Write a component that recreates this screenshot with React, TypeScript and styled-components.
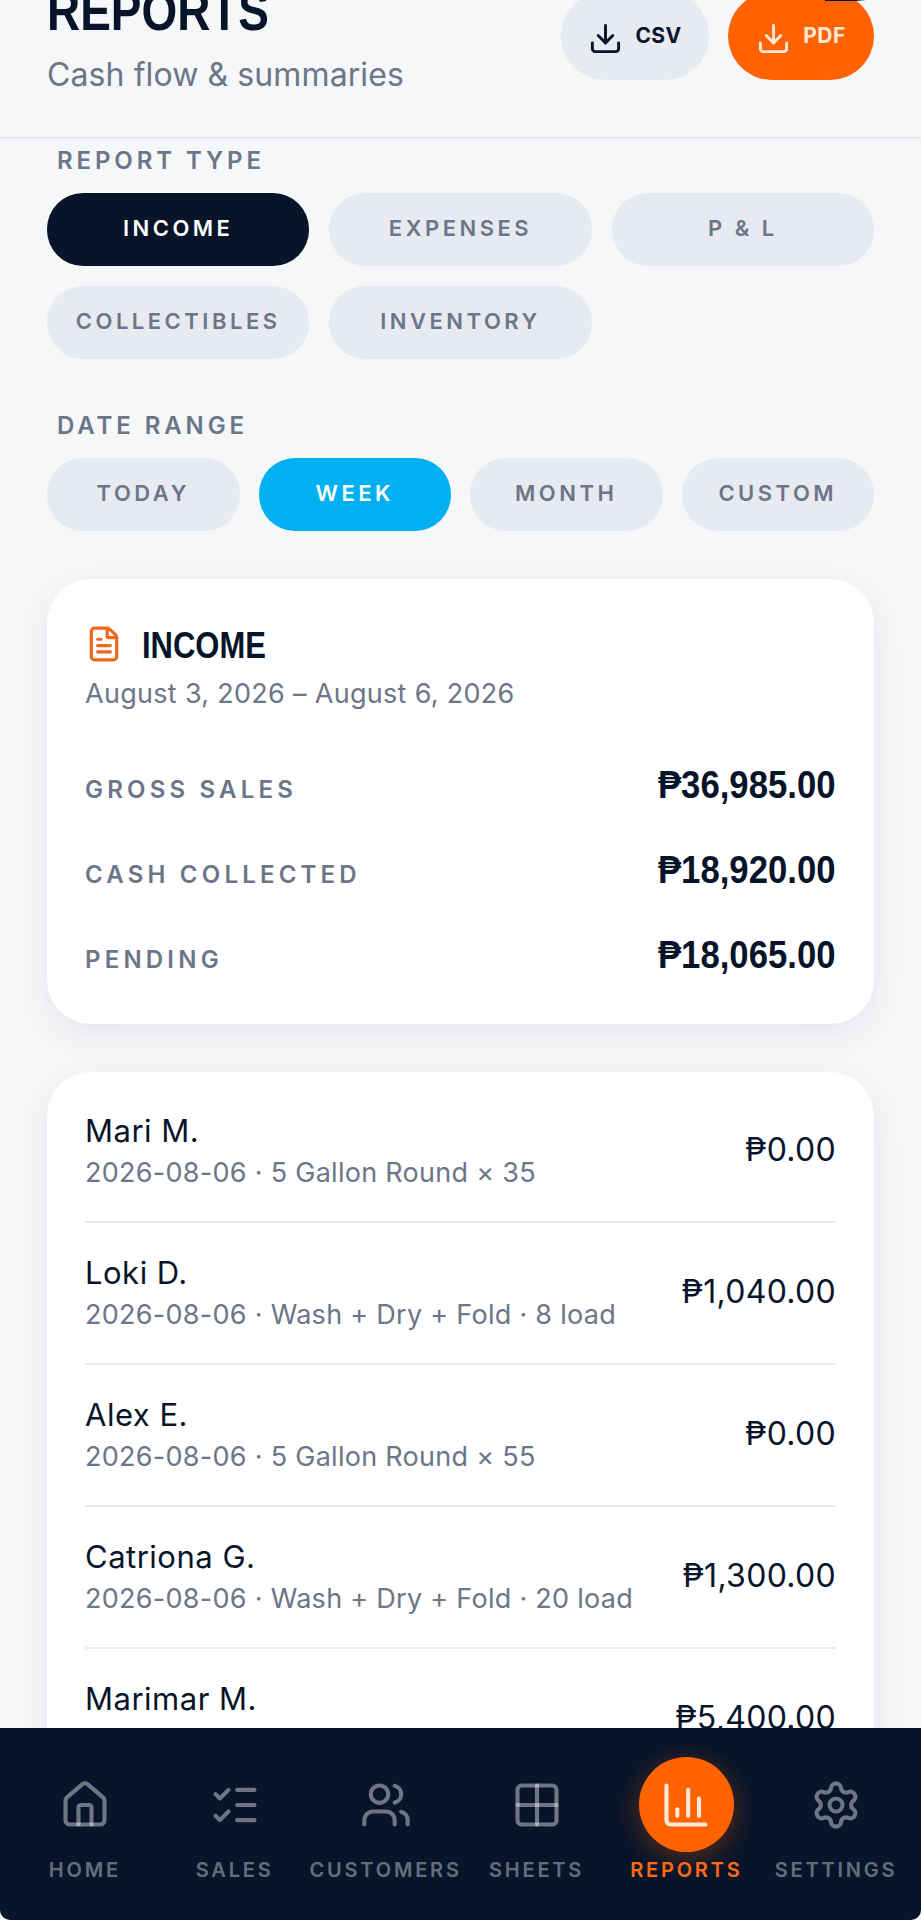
import React from "react";
import styled, { createGlobalStyle } from "styled-components";
import { ChartColumn, Download, FileText, Grid2x2, House, ListChecks, Settings, Users } from "lucide-react";

const GlobalStyle = createGlobalStyle`
  html, body {
    margin: 0;
    padding: 0;
    background: #f5f7f9;
  }
`;

const Screen = styled.div`
  width: 921px;
  height: 1920px;
  display: flex;
  flex-direction: column;
  overflow: hidden;
  background: #f5f7f9;
  font-family: Inter, "Open Sans", sans-serif;
  color: #07142a;
`;

const Content = styled.main`
  flex: 1;
  min-height: 0;
  overflow: hidden;
`;

const Header = styled.header`
  height: 145px;
  margin-top: -8px;
  padding: 0 47px;
  border-bottom: 2px solid #e6e9ee;
  display: flex;
  justify-content: space-between;
  align-items: flex-start;
`;

const TitleBlock = styled.div`
  margin-top: -6px;
`;

const Title = styled.h1`
  margin: 0;
  font: 700 56px/50px "Liberation Sans", sans-serif;
  color: #07142a;
  transform: scaleX(0.82);
  transform-origin: left center;
`;

const Subtitle = styled.p`
  margin: 19px 0 0;
  font-size: 32px;
  line-height: 40px;
  letter-spacing: 0.1px;
  color: #6b7688;
`;

const ExportButtons = styled.div`
  display: flex;
  gap: 19px;
`;

const ExportButton = styled.button<{ $primary?: boolean }>`
  position: relative;
  width: ${(p) => (p.$primary ? 146 : 148)}px;
  height: 88px;
  border: 0;
  border-radius: 44px;
  padding: 4px 0 0;
  display: flex;
  justify-content: center;
  align-items: center;
  gap: 12px;
  font: 700 21px Inter, sans-serif;
  letter-spacing: 0.4px;
  background: ${(p) => (p.$primary ? "#ff6200" : "#e7eaf0")};
  color: ${(p) => (p.$primary ? "#ffe9d9" : "#07142a")};

  /* sliver of the status bar left at the top of the capture */
  &::after {
    content: "${(p) => (p.$primary ? "" : "none")}";
    display: ${(p) => (p.$primary ? "block" : "none")};
    position: absolute;
    top: 8px;
    left: 97px;
    width: 40px;
    height: 1px;
    background: linear-gradient(90deg, #07142a 75%, rgba(7, 20, 42, 0.15));
  }
`;

const ButtonLabel = styled.span`
  margin-bottom: 6px;
`;

const Filters = styled.section`
  padding: 7px 47px 0;
`;

const FilterLabel = styled.div<{ $gapTop?: boolean }>`
  margin: ${(p) => (p.$gapTop ? "52px" : "0")} 0 17px 10px;
  font-size: 24px;
  line-height: 30px;
  font-weight: 600;
  letter-spacing: 3.9px;
  color: #6b7688;
`;

const ChipGrid = styled.div<{ $cols: number; $gap: number }>`
  display: grid;
  grid-template-columns: repeat(${(p) => p.$cols}, 1fr);
  gap: 20px ${(p) => p.$gap}px;
`;

const Chip = styled.div<{ $tone?: "dark" | "sky" }>`
  height: 73px;
  border-radius: 36px;
  display: flex;
  justify-content: center;
  align-items: center;
  padding-bottom: 4px;
  box-sizing: border-box;
  font-size: 22px;
  font-weight: 600;
  letter-spacing: 3.5px;
  background: ${(p) => (p.$tone === "dark" ? "#07142a" : p.$tone === "sky" ? "#00b0f0" : "#e7eaf0")};
  color: ${(p) => (p.$tone ? "#ffffff" : "#6b7688")};
`;

const Card = styled.section`
  margin: 48px 47px 0;
  background: #ffffff;
  border-radius: 44px;
  box-shadow: 0 10px 32px rgba(7, 20, 42, 0.07);
`;

const SummaryCard = styled(Card)`
  padding: 48px 38px 27px;
`;

const SummaryHead = styled.div`
  display: flex;
  align-items: center;
  gap: 19px;
  height: 34px;
  color: #f0661a;
`;

const SummaryTitle = styled.h2`
  margin: 4px 0 0;
  font: 700 36px/34px "Liberation Sans", sans-serif;
  color: #07142a;
  transform: scaleX(0.86);
  transform-origin: left center;
`;

const SummaryDates = styled.div`
  margin: 14px 0 29px;
  font-size: 27px;
  line-height: 38px;
  letter-spacing: 0.3px;
  color: #6b7688;
`;

const SummaryRow = styled.div`
  display: flex;
  justify-content: space-between;
  align-items: baseline;
`;

const SummaryLabel = styled.span`
  font-size: 24px;
  font-weight: 600;
  letter-spacing: 4.2px;
  color: #6b7688;
`;

const SummaryValue = styled.span`
  font: 700 39px/85px "Liberation Sans", sans-serif;
  color: #07142a;
  transform: scaleX(0.89);
  transform-origin: right center;
`;

const ListCard = styled(Card)`
  padding: 9px 38px 0;
`;

const SaleRow = styled.div`
  display: flex;
  justify-content: space-between;
  align-items: center;
  padding: 32px 0 30px;
  border-bottom: 2px solid #e8ebef;
`;

const SaleName = styled.div`
  font-size: 31px;
  line-height: 36px;
  letter-spacing: 0.5px;
  color: #07142a;
`;

const SaleMeta = styled.div`
  margin-top: 6px;
  font-size: 27px;
  line-height: 36px;
  letter-spacing: 0.28px;
  color: #6b7688;
`;

const SaleAmount = styled.div`
  padding-bottom: 6px;
  font-size: 32px;
  letter-spacing: 0.3px;
  color: #07142a;
`;

const Nav = styled.nav`
  height: 192px;
  flex: none;
  padding: 0 10px;
  display: grid;
  grid-template-columns: repeat(6, 1fr);
  background: #07142a;
  border-radius: 0 0 10px 10px;
`;

const NavItem = styled.div<{ $active?: boolean }>`
  display: flex;
  flex-direction: column;
  align-items: center;
  font-size: 20px;
  font-weight: 600;
  line-height: 24px;
  letter-spacing: 2.8px;
  white-space: nowrap;
  color: ${(p) => (p.$active ? "#ff6a13" : "rgba(255, 255, 255, 0.4)")};
`;

const NavIcon = styled.div<{ $active?: boolean }>`
  width: 95px;
  height: 95px;
  margin: 29px 0 6px;
  display: flex;
  justify-content: center;
  align-items: center;
  border-radius: 50%;
  background: ${(p) => (p.$active ? "#ff6200" : "transparent")};
  color: ${(p) => (p.$active ? "#ffe9d9" : "rgba(255, 255, 255, 0.42)")};
  box-shadow: ${(p) => (p.$active ? "0 6px 28px rgba(255, 98, 0, 0.35)" : "none")};
`;

const reportTypes = ["INCOME", "EXPENSES", "P & L", "COLLECTIBLES", "INVENTORY"];
const dateRanges = ["TODAY", "WEEK", "MONTH", "CUSTOM"];

const summary = [
  { label: "GROSS SALES", value: "₱36,985.00" },
  { label: "CASH COLLECTED", value: "₱18,920.00" },
  { label: "PENDING", value: "₱18,065.00" },
];

const sales = [
  { name: "Mari M.", meta: "2026-08-06 · 5 Gallon Round × 35", amount: "₱0.00" },
  { name: "Loki D.", meta: "2026-08-06 · Wash + Dry + Fold · 8 load", amount: "₱1,040.00" },
  { name: "Alex E.", meta: "2026-08-06 · 5 Gallon Round × 55", amount: "₱0.00" },
  { name: "Catriona G.", meta: "2026-08-06 · Wash + Dry + Fold · 20 load", amount: "₱1,300.00" },
  { name: "Marimar M.", meta: "2026-08-06 · Wash + Dry + Fold · 30 load", amount: "₱5,400.00" },
];

const navItems = [
  { label: "HOME", icon: House },
  { label: "SALES", icon: ListChecks },
  { label: "CUSTOMERS", icon: Users },
  { label: "SHEETS", icon: Grid2x2 },
  { label: "REPORTS", icon: ChartColumn, active: true },
  { label: "SETTINGS", icon: Settings },
];

export default function App() {
  return (
    <Screen>
      <GlobalStyle />
      <Content>
        <Header>
          <TitleBlock>
            <Title>REPORTS</Title>
            <Subtitle>Cash flow &amp; summaries</Subtitle>
          </TitleBlock>
          <ExportButtons>
            <ExportButton>
              <Download size={35} strokeWidth={2} />
              <ButtonLabel>CSV</ButtonLabel>
            </ExportButton>
            <ExportButton $primary>
              <Download size={35} strokeWidth={2} />
              <ButtonLabel>PDF</ButtonLabel>
            </ExportButton>
          </ExportButtons>
        </Header>

        <Filters>
          <FilterLabel>REPORT TYPE</FilterLabel>
          <ChipGrid $cols={3} $gap={20}>
            {reportTypes.map((t) => (
              <Chip key={t} $tone={t === "INCOME" ? "dark" : undefined}>
                {t}
              </Chip>
            ))}
          </ChipGrid>
          <FilterLabel $gapTop>DATE RANGE</FilterLabel>
          <ChipGrid $cols={4} $gap={19}>
            {dateRanges.map((d) => (
              <Chip key={d} $tone={d === "WEEK" ? "sky" : undefined}>
                {d}
              </Chip>
            ))}
          </ChipGrid>
        </Filters>

        <SummaryCard>
          <SummaryHead>
            <FileText size={38} strokeWidth={2} />
            <SummaryTitle>INCOME</SummaryTitle>
          </SummaryHead>
          <SummaryDates>August 3, 2026 – August 6, 2026</SummaryDates>
          {summary.map((s) => (
            <SummaryRow key={s.label}>
              <SummaryLabel>{s.label}</SummaryLabel>
              <SummaryValue>{s.value}</SummaryValue>
            </SummaryRow>
          ))}
        </SummaryCard>

        <ListCard>
          {sales.map((s) => (
            <SaleRow key={s.name}>
              <div>
                <SaleName>{s.name}</SaleName>
                <SaleMeta>{s.meta}</SaleMeta>
              </div>
              <SaleAmount>{s.amount}</SaleAmount>
            </SaleRow>
          ))}
        </ListCard>
      </Content>

      <Nav>
        {navItems.map(({ label, icon: Icon, active }) => (
          <NavItem key={label} $active={active}>
            <NavIcon $active={active}>
              <Icon size={52} strokeWidth={1.9} />
            </NavIcon>
            {label}
          </NavItem>
        ))}
      </Nav>
    </Screen>
  );
}
